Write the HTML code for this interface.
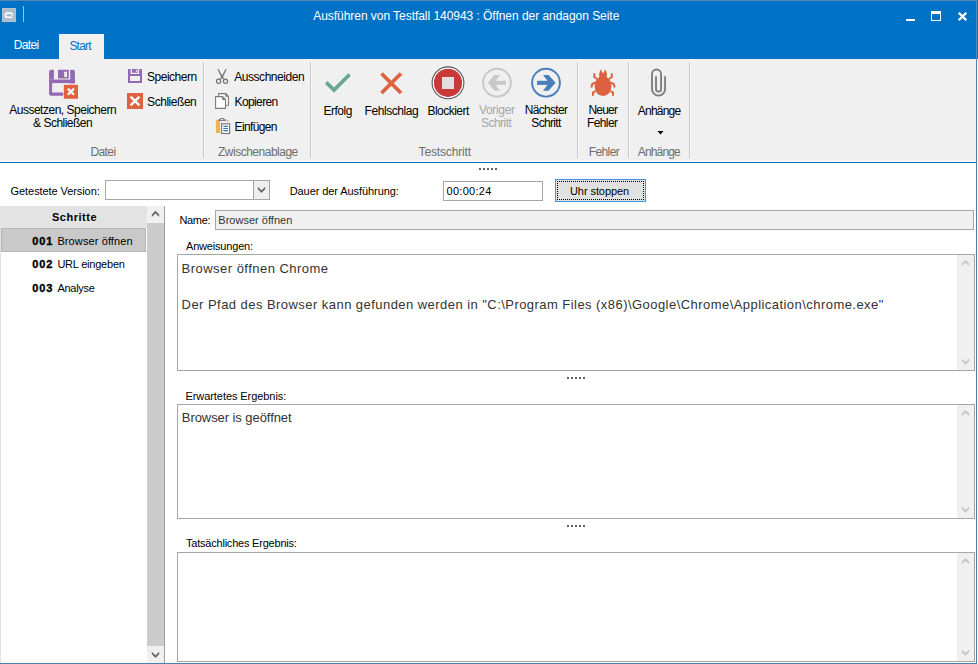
<!DOCTYPE html>
<html><head><meta charset="utf-8"><style>
html,body{margin:0;padding:0;width:978px;height:664px;overflow:hidden;background:#fff;position:relative;font-family:"Liberation Sans",sans-serif}
.t{position:absolute;white-space:pre;font-family:"Liberation Sans",sans-serif}
.a{position:absolute;box-sizing:border-box}
.sep{position:absolute;width:2px;top:62px;height:96px;background:linear-gradient(90deg,#c8c8c8 0 1px,#f8f8f8 1px 2px)}
.dots{position:absolute;width:18px;height:2px;background:repeating-linear-gradient(90deg,#646464 0 2px,transparent 2px 4px)}

</style></head><body>
<!-- title bar -->
<div class="a" style="left:0;top:0;width:976px;height:59px;background:#0072c6"></div>
<div class="a" style="left:0;top:0;width:976px;height:1px;background:#5884b8"></div>
<svg class="a" style="left:0;top:0" width="30" height="30"><rect x="2.5" y="8.5" width="13" height="13" fill="#a8bbcf" stroke="#b7c3cf" stroke-width="1"/><path d="M12.3 15.4V14.6A1.5 1.5 0 0 0 10.8 13.1H7.4A2.05 2.05 0 0 0 7.4 17.2H12.4" fill="none" stroke="#fff" stroke-width="1.6"/></svg>
<div class="a" style="left:23px;top:6px;width:1px;height:16px;background:#9cc0e4"></div>
<!-- window buttons -->
<div class="a" style="left:906px;top:19px;width:9px;height:2px;background:#fff"></div>
<div class="a" style="left:931px;top:11px;width:10px;height:10px;border:1px solid #fff;border-top-width:3px"></div>
<svg class="a" style="left:957px;top:11px" width="11" height="11"><path d="M1.7 1.7L9.3 9.3M9.3 1.7L1.7 9.3" stroke="#fff" stroke-width="2.3"/></svg>
<!-- start tab -->
<div class="a" style="left:59px;top:34px;width:45px;height:25px;background:#f0f0f0"></div>
<!-- ribbon -->
<div class="a" style="left:0;top:59px;width:976px;height:102px;background:#f0f0f0"></div>
<div class="a" style="left:0;top:161px;width:976px;height:1px;background:#f7f5f1"></div>
<div class="a" style="left:0;top:162px;width:976px;height:1px;background:#0072c6"></div>
<div class="sep" style="left:203px"></div>
<div class="sep" style="left:310px"></div>
<div class="sep" style="left:577px"></div>
<div class="sep" style="left:628px"></div>
<div class="sep" style="left:689px"></div>
<!-- window borders -->
<div class="a" style="left:977px;top:0;width:1px;height:59px;background:#0072c6"></div>
<div class="a" style="left:976px;top:0;width:1px;height:59px;background:#5884b8"></div>
<div class="a" style="left:976px;top:59px;width:1px;height:605px;background:#4b82b9"></div>
<div class="a" style="left:0;top:663px;width:977px;height:1px;background:#4a7fb8"></div>
<div class="a" style="left:0;top:206px;width:1px;height:457px;background:#e3e3e3"></div>

<svg class="a" style="left:0;top:0" width="978" height="664" viewBox="0 0 978 664">
 <!-- big floppy -->
 <g fill="#9369b4">
  <path d="M51 69.8H53.9V79.5H49.1V71.7A1.9 1.9 0 0 1 51 69.8Z"/>
  <rect x="49.1" y="79.5" width="3" height="14.2"/>
  <path d="M49.1 92.6H63.7V95.7H51A1.9 1.9 0 0 1 49.1 93.8Z"/>
  <rect x="49.1" y="79.5" width="25.8" height="3.6"/>
  <path d="M70.2 69.8H73A1.9 1.9 0 0 1 74.9 71.7V83.5H70.2Z"/>
  <path d="M58 69.8H68.8V78.6H58Z M64.2 71.8V77H67V71.8Z" fill-rule="evenodd"/>
 </g>
 <rect x="63.2" y="84.2" width="15.3" height="15" fill="#f6f6f6"/>
 <rect x="63.8" y="84.8" width="14.2" height="14" fill="#e0613f"/>
 <path d="M67.8 88.6L74 94.8M74 88.6L67.8 94.8" stroke="#f4f4f4" stroke-width="2.3"/>
 <!-- small floppy -->
 <g fill="#9369b4">
  <path d="M128.5 69H130.6V74H128V69.5A0.5 0.5 0 0 1 128.5 69Z"/>
  <rect x="128" y="74" width="2" height="9"/>
  <rect x="128" y="74" width="14" height="2"/>
  <path d="M128 81H142V82.5A0.5 0.5 0 0 1 141.5 83H128.5A0.5 0.5 0 0 1 128 82.5Z"/>
  <path d="M139.1 69H141.5A0.5 0.5 0 0 1 142 69.5V83H140V76H139.1Z"/>
  <path d="M132 69H137.8V72.8H132Z M135.9 70V72H137V70Z" fill-rule="evenodd"/>
 </g>
 <!-- small close -->
 <rect x="127" y="93" width="16" height="16" fill="#e0613f"/>
 <path d="M130.6 96.6L139.4 105.4M139.4 96.6L130.6 105.4" stroke="#fff" stroke-width="2.3"/>
 <!-- scissors -->
 <g fill="#707070">
  <path d="M217.5 69.2L218.6 69L222.6 76.5L221.2 79.5L220 78.3L221.2 77Z"/>
  <path d="M226.7 69.2L225.6 69L221.6 76.5L223 79.5L224.2 78.3L223 77Z"/>
 </g>
 <circle cx="218.6" cy="81.2" r="2.1" fill="none" stroke="#707070" stroke-width="1.2"/>
 <circle cx="225.5" cy="81.2" r="2.1" fill="none" stroke="#707070" stroke-width="1.2"/>
 <!-- copy -->
 <path d="M218.7 96.6V93.6H225.8L228.4 96.2V105.3H226.1" fill="#fff" stroke="#7a7a7a" stroke-width="1.1"/>
 <path d="M225.2 93.6V96.8H228.4Z" fill="#7a7a7a"/>
 <path d="M215.6 96.6H222.6L225.5 99.4V108.4H215.6Z" fill="#fff" stroke="#7a7a7a" stroke-width="1.1"/>
 <path d="M222.2 96.6V99.9H225.5Z" fill="#7a7a7a"/>
 <!-- paste -->
 <rect x="215.9" y="119.8" width="4.2" height="13.2" fill="#e9b45a"/>
 <rect x="226.9" y="119.8" width="1.4" height="2.2" fill="#e9b45a"/>
 <path d="M218.3 121.1V119.2H220.2V118.1H224V119.2H225.9V121.1Z" fill="#7a7a7a"/><rect x="221" y="119.1" width="2.2" height="1" fill="#fff"/>
 <rect x="221.6" y="123.8" width="8" height="9.7" fill="#fff" stroke="#7a7a7a" stroke-width="1.2"/>
 <path d="M223.3 126.4H228M223.3 128.5H228M223.3 130.6H228" stroke="#3a75c0" stroke-width="1.1"/>
 <!-- check -->
 <path d="M326.3 82.4L334 90.1L349.6 74.5" fill="none" stroke="#6ba690" stroke-width="3.7"/>
 <!-- big X -->
 <path d="M381.5 73.5L401 93M401 73.5L381.5 93" stroke="#e0613f" stroke-width="3.8"/>
 <!-- stop -->
 <circle cx="448" cy="82.8" r="15.9" fill="#fff" stroke="#555" stroke-width="1.1"/>
 <circle cx="448" cy="82.8" r="14.1" fill="#c9393a"/>
 <rect x="442" y="77" width="12" height="12" fill="#e0e0e0"/>
 <!-- prev -->
 <circle cx="497" cy="82.7" r="13.9" fill="none" stroke="#c8c8c8" stroke-width="1.9"/>
 <rect x="491" y="80.8" width="15" height="4.1" fill="#c8c8c8"/>
 <path d="M500 75H494.5L487.8 82.8L494.5 90.8H500L494 82.8Z" fill="#c8c8c8"/>
 <!-- next -->
 <circle cx="546" cy="82.7" r="13.9" fill="none" stroke="#4a7ebb" stroke-width="1.9"/>
 <rect x="537" y="80.8" width="15" height="4.1" fill="#4a7ebb"/>
 <path d="M543 75H548.5L555.6 82.8L548.5 90.8H543L549 82.8Z" fill="#4a7ebb"/>
 <!-- bug -->
 <g fill="#df603e">
  <ellipse cx="603" cy="86" rx="8.4" ry="10.1"/>
  <path d="M599.4 77C598.8 74 599.2 71.5 601.2 69.2L602.2 72.8H603.9L604.9 69.2C606.9 71.5 607.3 74 606.7 77Z"/>
 </g>
 <g stroke="#df603e" stroke-width="2" fill="none" stroke-linejoin="miter">
  <path d="M594.3 73.2V77L597 79M611.8 73.2V77L609 79M595.5 82.4L592.3 84L591.3 87.6M610.5 82.4L613.7 84L614.7 87.6M595.6 91L593 92.6V95.8M610.4 91L613 92.6V95.8"/>
 </g>
 <!-- paperclip -->
 <path d="M665.1 76.2V89A6.55 6.55 0 0 1 652 89V74.05A4.55 4.55 0 0 1 661.1 74.05V89A2.55 2.55 0 0 1 656 89V76.2" fill="none" stroke="#7b7b7b" stroke-width="1.8"/>
 <path d="M657.5 131H663.5L660.5 134.5Z" fill="#000"/>
</svg>
<!-- grip dots -->
<div class="dots" style="left:479px;top:168px"></div>
<div class="dots" style="left:567px;top:377px"></div>
<div class="dots" style="left:567px;top:525px"></div>

<!-- combo -->
<div class="a" style="left:105px;top:180px;width:165px;height:20px;border:1px solid #a6a6a6;background:#fff"></div>
<div class="a" style="left:253px;top:180px;width:17px;height:20px;border:1px solid #a6a6a6;background:#eeeeee"></div>
<!-- time box -->
<div class="a" style="left:443px;top:181px;width:100px;height:20px;border:1px solid #a6a6a6;background:#fff"></div>
<!-- button -->
<div class="a" style="left:555px;top:179px;width:91px;height:23px;border:1px solid #3e95e8;background:#e1e1e1"></div>
<div class="a" style="left:557px;top:181px;width:87px;height:19px;border:1px dotted #000"></div>

<!-- left list -->
<div class="a" style="left:1px;top:206px;width:146px;height:22px;background:#e3e3e3"></div>
<div class="a" style="left:1px;top:228px;width:145px;height:24px;background:#c9c9c9;border:1px solid #b4b4b4"></div>
<!-- list scrollbar -->
<div class="a" style="left:147px;top:206px;width:17px;height:457px;background:#cccccc"></div>
<div class="a" style="left:147px;top:206px;width:17px;height:17px;background:#f0f0f0"></div>
<div class="a" style="left:147px;top:646px;width:17px;height:17px;background:#f0f0f0"></div>
<div class="a" style="left:164px;top:206px;width:1px;height:457px;background:#a0a0a0"></div>

<!-- name field -->
<div class="a" style="left:215px;top:210px;width:759px;height:20px;border:1px solid #a6a6a6;background:#f0f0f0"></div>
<!-- textboxes -->
<div class="a" style="left:177px;top:254px;width:798px;height:117px;border:1px solid #a6a6a6;background:#fff"></div>
<div class="a" style="left:957px;top:255px;width:17px;height:115px;background:#f0f0f0"></div>
<div class="a" style="left:177px;top:404px;width:798px;height:115px;border:1px solid #a6a6a6;background:#fff"></div>
<div class="a" style="left:957px;top:405px;width:17px;height:113px;background:#f0f0f0"></div>
<div class="a" style="left:177px;top:552px;width:798px;height:110px;border:1px solid #a6a6a6;background:#fff"></div>
<div class="a" style="left:957px;top:553px;width:17px;height:108px;background:#f0f0f0"></div>
<svg class="a" style="left:0;top:0" width="978" height="664"><path d="M155.5 210.8L159.2 214.4V217.0L155.5 213.5L151.8 217.0V214.4Z" fill="#6a6a6a"/><path d="M155.5 657.9L159.2 654.3V651.6999999999999L155.5 655.1999999999999L151.8 651.6999999999999V654.3Z" fill="#6a6a6a"/><path d="M261.5 192.9L265.2 189.3V186.70000000000002L261.5 190.20000000000002L257.8 186.70000000000002V189.3Z" fill="#6a6a6a"/><path d="M965.5 259.9L969.2 263.5V266.09999999999997L965.5 262.59999999999997L961.8 266.09999999999997V263.5Z" fill="#c6c6c6"/><path d="M965.5 364.7L969.2 361.09999999999997V358.5L965.5 362.0L961.8 358.5V361.09999999999997Z" fill="#c6c6c6"/><path d="M965.5 410L969.2 413.6V416.2L965.5 412.7L961.8 416.2V413.6Z" fill="#c6c6c6"/><path d="M965.5 512.7L969.2 509.1V506.50000000000006L965.5 510.00000000000006L961.8 506.50000000000006V509.1Z" fill="#c6c6c6"/><path d="M965.5 558L969.2 561.6V564.2L965.5 560.7L961.8 564.2V561.6Z" fill="#c6c6c6"/><path d="M965.5 655.8L969.2 652.1999999999999V649.5999999999999L965.5 653.0999999999999L961.8 649.5999999999999V652.1999999999999Z" fill="#c6c6c6"/></svg>

<div class="t" style="left:313.20px;top:9.64px;font-size:12px;line-height:12px;letter-spacing:-0.042px;color:#fff;font-weight:400;">Ausführen von Testfall 140943 : Öffnen der andagon Seite</div>
<div class="t" style="left:13.70px;top:38.84px;font-size:12px;line-height:12px;letter-spacing:-0.637px;color:#fff;font-weight:400;">Datei</div>
<div class="t" style="left:69.40px;top:39.64px;font-size:12px;line-height:12px;letter-spacing:-0.777px;color:#0072c6;font-weight:400;">Start</div>
<div class="t" style="left:9.20px;top:103.84px;font-size:12px;line-height:12px;letter-spacing:-0.488px;color:#000;font-weight:400;">Aussetzen, Speichern</div>
<div class="t" style="left:33.10px;top:116.74px;font-size:12px;line-height:12px;letter-spacing:-0.513px;color:#000;font-weight:400;">&amp; Schließen</div>
<div class="t" style="left:147.10px;top:70.74px;font-size:12px;line-height:12px;letter-spacing:-0.508px;color:#000;font-weight:400;">Speichern</div>
<div class="t" style="left:147.10px;top:95.54px;font-size:12px;line-height:12px;letter-spacing:-0.461px;color:#000;font-weight:400;">Schließen</div>
<div class="t" style="left:234.30px;top:70.64px;font-size:12px;line-height:12px;letter-spacing:-0.465px;color:#000;font-weight:400;">Ausschneiden</div>
<div class="t" style="left:234.60px;top:95.54px;font-size:12px;line-height:12px;letter-spacing:-0.623px;color:#000;font-weight:400;">Kopieren</div>
<div class="t" style="left:234.60px;top:120.64px;font-size:12px;line-height:12px;letter-spacing:-0.643px;color:#000;font-weight:400;">Einfügen</div>
<div class="t" style="left:323.50px;top:104.64px;font-size:12px;line-height:12px;letter-spacing:-0.495px;color:#000;font-weight:400;">Erfolg</div>
<div class="t" style="left:364.60px;top:104.64px;font-size:12px;line-height:12px;letter-spacing:-0.440px;color:#000;font-weight:400;">Fehlschlag</div>
<div class="t" style="left:427.40px;top:104.54px;font-size:12px;line-height:12px;letter-spacing:-0.510px;color:#000;font-weight:400;">Blockiert</div>
<div class="t" style="left:479.00px;top:103.64px;font-size:12px;line-height:12px;letter-spacing:-0.338px;color:#a6a6a6;font-weight:400;">Voriger</div>
<div class="t" style="left:481.00px;top:116.64px;font-size:12px;line-height:12px;letter-spacing:-0.529px;color:#a6a6a6;font-weight:400;">Schritt</div>
<div class="t" style="left:524.70px;top:103.64px;font-size:12px;line-height:12px;letter-spacing:-0.674px;color:#000;font-weight:400;">Nächster</div>
<div class="t" style="left:531.30px;top:116.64px;font-size:12px;line-height:12px;letter-spacing:-0.662px;color:#000;font-weight:400;">Schritt</div>
<div class="t" style="left:588.40px;top:103.84px;font-size:12px;line-height:12px;letter-spacing:-0.797px;color:#000;font-weight:400;">Neuer</div>
<div class="t" style="left:587.00px;top:116.64px;font-size:12px;line-height:12px;letter-spacing:-0.604px;color:#000;font-weight:400;">Fehler</div>
<div class="t" style="left:637.80px;top:104.54px;font-size:12px;line-height:12px;letter-spacing:-0.796px;color:#000;font-weight:400;">Anhänge</div>
<div class="t" style="left:90.50px;top:145.64px;font-size:12px;line-height:12px;letter-spacing:-0.612px;color:#6d6d6d;font-weight:400;">Datei</div>
<div class="t" style="left:218.00px;top:145.64px;font-size:12px;line-height:12px;letter-spacing:-0.496px;color:#6d6d6d;font-weight:400;">Zwischenablage</div>
<div class="t" style="left:418.60px;top:145.64px;font-size:12px;line-height:12px;letter-spacing:-0.148px;color:#6d6d6d;font-weight:400;">Testschritt</div>
<div class="t" style="left:588.80px;top:145.64px;font-size:12px;line-height:12px;letter-spacing:-0.624px;color:#6d6d6d;font-weight:400;">Fehler</div>
<div class="t" style="left:637.80px;top:145.64px;font-size:12px;line-height:12px;letter-spacing:-0.846px;color:#6d6d6d;font-weight:400;">Anhänge</div>
<div class="t" style="left:10.60px;top:185.59px;font-size:11px;line-height:11px;letter-spacing:-0.079px;color:#000;font-weight:400;">Getestete Version:</div>
<div class="t" style="left:289.70px;top:185.59px;font-size:11px;line-height:11px;letter-spacing:-0.077px;color:#000;font-weight:400;">Dauer der Ausführung:</div>
<div class="t" style="left:446.60px;top:185.59px;font-size:11px;line-height:11px;letter-spacing:0.271px;color:#000;font-weight:400;">00:00:24</div>
<div class="t" style="left:570.00px;top:185.89px;font-size:11px;line-height:11px;letter-spacing:-0.081px;color:#000;font-weight:400;">Uhr stoppen</div>
<div class="t" style="left:51.90px;top:211.89px;font-size:11px;line-height:11px;letter-spacing:0.523px;color:#000;font-weight:700;">Schritte</div>
<div class="t" style="left:32.20px;top:235.59px;font-size:11px;line-height:11px;letter-spacing:0.882px;color:#000;font-weight:700;-webkit-text-stroke:0.35px #000">001</div>
<div class="t" style="left:57.40px;top:235.59px;font-size:11px;line-height:11px;letter-spacing:0.110px;color:#000;font-weight:400;">Browser öffnen</div>
<div class="t" style="left:32.20px;top:259.39px;font-size:11px;line-height:11px;letter-spacing:0.882px;color:#000;font-weight:700;-webkit-text-stroke:0.35px #000">002</div>
<div class="t" style="left:57.40px;top:259.39px;font-size:11px;line-height:11px;letter-spacing:-0.219px;color:#000;font-weight:400;">URL eingeben</div>
<div class="t" style="left:32.20px;top:282.89px;font-size:11px;line-height:11px;letter-spacing:0.882px;color:#000;font-weight:700;-webkit-text-stroke:0.35px #000">003</div>
<div class="t" style="left:57.40px;top:282.89px;font-size:11px;line-height:11px;letter-spacing:-0.269px;color:#000;font-weight:400;">Analyse</div>
<div class="t" style="left:179.50px;top:214.69px;font-size:11px;line-height:11px;letter-spacing:-0.361px;color:#000;font-weight:400;">Name:</div>
<div class="t" style="left:218.30px;top:214.69px;font-size:11px;line-height:11px;letter-spacing:0.018px;color:#333;font-weight:400;">Browser öffnen</div>
<div class="t" style="left:186.00px;top:240.69px;font-size:11px;line-height:11px;letter-spacing:-0.186px;color:#000;font-weight:400;">Anweisungen:</div>
<div class="t" style="left:181.60px;top:261.70px;font-size:13px;line-height:13px;letter-spacing:0.469px;color:#333;font-weight:400;">Browser öffnen Chrome</div>
<div class="t" style="left:181.60px;top:297.70px;font-size:13px;line-height:13px;letter-spacing:0.450px;color:#333;font-weight:400;">Der Pfad des Browser kann gefunden werden in &quot;C:\Program Files (x86)\Google\Chrome\Application\chrome.exe&quot;</div>
<div class="t" style="left:185.50px;top:390.59px;font-size:11px;line-height:11px;letter-spacing:-0.071px;color:#000;font-weight:400;">Erwartetes Ergebnis:</div>
<div class="t" style="left:181.80px;top:410.50px;font-size:13px;line-height:13px;letter-spacing:-0.068px;color:#333;font-weight:400;">Browser is geöffnet</div>
<div class="t" style="left:186.00px;top:538.29px;font-size:11px;line-height:11px;letter-spacing:-0.214px;color:#000;font-weight:400;">Tatsächliches Ergebnis:</div>
</body></html>
